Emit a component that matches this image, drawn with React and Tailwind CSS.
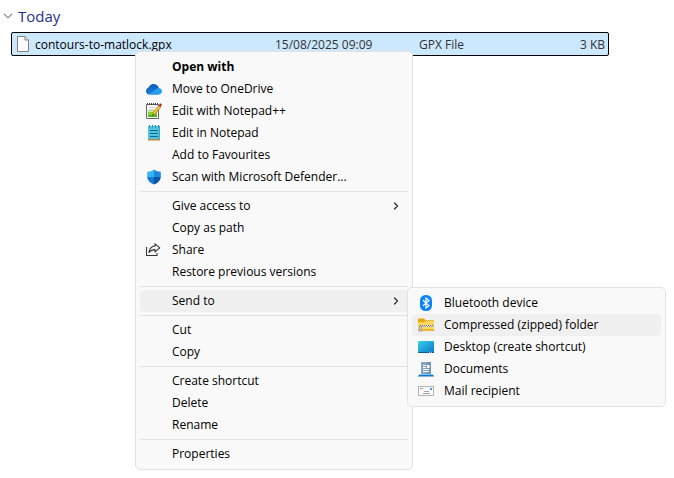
import { ChevronDown, ChevronRight } from "lucide-react";

function OneDriveIcon() {
  return (
    <svg viewBox="0 0 16 16" className="size-4" aria-hidden="true">
      <path d="M2 9C2.400 5.500 4.500 3 7.500 3c2.700 0 4.800 1.700 5.500 4.200L9 11z" fill="#1061bd" />
      <path d="M3.800 13.500A3.700 3.700 0 0 1 0 10c0-2.200 1.700-3.700 3.800-3.700 1.700 0 2.700.6 4 1.500L13 13.500z" fill="#1570d0" />
      <path d="M2.800 13.300 8.500 9c1.400-1 2.500-1.900 4-1.900 2 0 3.500 1.500 3.500 3.200s-1.400 3.200-3.200 3.200H4c-.5 0-.8 0-1.200-.2z" fill="#2a9df0" />
    </svg>
  );
}

function NotepadPlusIcon() {
  return (
    <svg viewBox="0 0 16 16" className="size-4" aria-hidden="true">
      <path d="M.5 1.500h12v14H.5z" fill="#fbfbf8" stroke="#666" />
      <path d="M1 1h11" stroke="#444" strokeWidth="2" strokeDasharray="1 1" />
      <path d="M3 4.500h6M3 6.500h5" stroke="#d4d4d0" />
      <path d="M2 7h9v7H2z" fill="#c4e88f" />
      <path d="M2 9h9v5H2z" fill="#84d133" />
      <path d="M2 12h9v2H2z" fill="#55b51e" />
      <path d="M6.500 12.500 7.200 9.500 12.800 2.500l2 1.600-5.700 7z" fill="#f6c52c" stroke="#8a6412" strokeWidth=".6" />
      <path d="m12.700 2.600 1.500-2.400L16 1.600l-1.400 2.300z" fill="#b3262b" />
      <path d="m6.500 12.500.3-1.500 1 .9z" fill="#222" />
    </svg>
  );
}

function NotepadIcon() {
  return (
    <svg viewBox="0 0 16 16" className="size-4" aria-hidden="true">
      <path d="M2 1h12v13H2z" fill="#50c3dd" />
      <path d="M2 14h12v1.500H2z" fill="#b98a4c" />
      <path d="M13 1h1v13h-1z" fill="#37a9c8" />
      <path d="M3.500 0v2.500M6.500 0v2.500M9.500 0v2.500M12.500 0v2.500" stroke="#2c86ae" />
      <path d="M4 5.500h8M4 8.500h8M4 11.500h8" stroke="#17648f" />
    </svg>
  );
}

function DefenderIcon() {
  return (
    <svg viewBox="0 0 16 16" className="size-4" aria-hidden="true">
      <path d="M8 .5C6 2 4 2.700 1.200 2.700V8H8z" fill="#38b5f0" />
      <path d="M8 .5c2 1.500 4 2.200 6.800 2.200V8H8z" fill="#1a8be0" />
      <path d="M1.200 8C1.500 11.500 4 14 8 15.600V8z" fill="#1479d2" />
      <path d="M14.800 8c-.3 3.500-2.800 6-6.800 7.600V8z" fill="#0b55a8" />
    </svg>
  );
}

function ShareIcon() {
  return (
    <svg viewBox="0 0 16 16" className="size-4" fill="none" stroke="#333" strokeWidth="1.100" strokeLinejoin="round" aria-hidden="true">
      <path d="M.5 5v8.500h10.500V11" />
      <path d="M9 1.800 13.800 5.800 9 9.800V7.600C6.300 7.400 4.500 8.500 3 10.500 3.400 7 5.500 4.300 9 4z" />
    </svg>
  );
}

function BluetoothIcon() {
  return (
    <svg viewBox="0 0 16 16" className="size-4" aria-hidden="true">
      <rect x="2" width="12" height="16" rx="5.500" fill="#0a84ff" />
      <path d="m5 5.200 6 5.400L8 13V3l3 2.500-6 5.300" fill="none" stroke="#fff" strokeWidth="1.200" />
    </svg>
  );
}

function ZipIcon() {
  return (
    <svg viewBox="0 0 16 16" className="size-4" aria-hidden="true">
      <path d="M0 2.500c0-.5.4-.9.9-.9H6L7.500 3.200H15c.6 0 1 .4 1 .9V8H0z" fill="#e9a60c" />
      <path d="M0 5.200h6L7.500 4H15c.6 0 1 .3 1 .8v8.400c0 .5-.4.900-1 .900H1c-.6 0-1-.4-1-.9z" fill="#ffd65e" />
      <path d="M0 12h16v1.200c0 .5-.4.9-1 .9H1c-.6 0-1-.4-1-.9z" fill="#f2b52b" />
      <path d="M2 9h14" stroke="#e4e4e4" strokeWidth="2" />
      <path d="M2 8.500h14" stroke="#666" strokeDasharray="1 1" />
      <path d="M3 9.500h13" stroke="#999" strokeDasharray="1 1" />
      <path d="M1.500 9h2v2l.5 3H1l.5-3z" fill="#d6d6d6" stroke="#888" strokeWidth=".7" />
    </svg>
  );
}

function DesktopIcon() {
  return (
    <svg viewBox="0 0 16 16" className="size-4" aria-hidden="true">
      <defs>
        <linearGradient id="desk" x1="0" y1="0" x2="1" y2="1">
          <stop offset="0" stopColor="#35d3e6" />
          <stop offset="1" stopColor="#0b74c9" />
        </linearGradient>
      </defs>
      <rect y="2" width="16" height="12" rx=".8" fill="url(#desk)" />
      <path d="M0 13h16v.2c0 .5-.3.8-.8.8H.8c-.5 0-.8-.3-.8-.8z" fill="#0a5a9c" />
      <path d="M11 13.300h4" stroke="#fff" strokeWidth=".9" strokeDasharray="1 1" />
    </svg>
  );
}

function DocumentsIcon() {
  return (
    <svg viewBox="0 0 16 16" className="size-4" aria-hidden="true">
      <path d="M3 2c0-.6.400-1 1-1h8c.6 0 1 .4 1 1v12H3z" fill="#86a5c3" />
      <path d="M9 1h3c.6 0 1 .4 1 1v12H9z" fill="#7393b5" />
      <path d="M5 4.500h3M5 6.500h3M5 8.500h6M5 10.500h6" stroke="#fff" />
      <path d="M9 4h2.500v3H9z" fill="#fff" />
      <path d="M1.500 13.500h13L16 15v.5H0V15z" fill="#1177cf" />
      <path d="M2 13h12l1 1H1z" fill="#7cc4f5" />
    </svg>
  );
}

function MailIcon() {
  return (
    <svg viewBox="0 0 16 16" className="size-4" aria-hidden="true">
      <rect x=".5" y="3.500" width="15" height="9" fill="#fafafa" stroke="#b4b4b4" />
      <path d="M2 5.500h3M6 8.500h5M5 10.500h7" stroke="#a3a3a3" />
      <path d="M12 5h2v2h-2z" fill="#3a93e6" />
    </svg>
  );
}

function FileIcon() {
  return (
    <svg viewBox="0 0 12 16" className="h-4 w-3 shrink-0" aria-hidden="true">
      <path d="M.5.5h7.500l3.500 3.500v11.500H.5z" fill="#fbfbfb" stroke="#828282" />
      <path d="M8 .5V4h3.500" fill="#e8e8e8" stroke="#828282" />
    </svg>
  );
}

const menuGroups = [
  [
    { label: "Open with", bold: true },
    { label: "Move to OneDrive", icon: OneDriveIcon },
    { label: "Edit with Notepad++", icon: NotepadPlusIcon },
    { label: "Edit in Notepad", icon: NotepadIcon },
    { label: "Add to Favourites" },
    { label: "Scan with Microsoft Defender...", icon: DefenderIcon },
  ],
  [
    { label: "Give access to", arrow: true },
    { label: "Copy as path" },
    { label: "Share", icon: ShareIcon },
    { label: "Restore previous versions" },
  ],
  [
    {
      label: "Send to",
      arrow: true,
      active: true,
      children: [
        { label: "Bluetooth device", icon: BluetoothIcon },
        { label: "Compressed (zipped) folder", icon: ZipIcon, active: true },
        { label: "Desktop (create shortcut)", icon: DesktopIcon },
        { label: "Documents", icon: DocumentsIcon },
        { label: "Mail recipient", icon: MailIcon },
      ],
    },
  ],
  [{ label: "Cut" }, { label: "Copy" }],
  [{ label: "Create shortcut" }, { label: "Delete" }, { label: "Rename" }],
  [{ label: "Properties" }],
];

const panel = "absolute rounded-[5px] border border-[#e2e2e2] bg-[#f9f9f9] p-1";

function MenuItem({ item }) {
  const Icon = item.icon;
  return (
    <li role="none" className="relative">
      <button
        type="button"
        role="menuitem"
        aria-haspopup={item.arrow ? "menu" : undefined}
        aria-expanded={item.children ? true : undefined}
        className={`flex h-[22px] w-full items-center gap-2.5 rounded-[4px] px-1.5 text-left whitespace-nowrap hover:bg-[#f0f0f0] ${
          item.active ? "bg-[#f0f0f0]" : ""
        } ${item.bold ? "font-bold" : ""}`}
      >
        <span className="size-4 shrink-0">{Icon && <Icon />}</span>
        <span className="flex-1">{item.label}</span>
        {item.arrow && <ChevronRight className="size-3 text-[#2b2b33]" strokeWidth={2.5} aria-hidden="true" />}
      </button>
      {item.children && (
        <ul role="menu" aria-label={item.label} className={`${panel} -top-[3px] left-[267px] w-[259px]`}>
          {item.children.map((child) => (
            <MenuItem key={child.label} item={child} />
          ))}
        </ul>
      )}
    </li>
  );
}

function ContextMenu() {
  return (
    <div role="menu" aria-label="File actions" className={`${panel} top-[19px] left-[124px] w-[278px] text-black`}>
      {menuGroups.map((group, i) => (
        <ul key={group[0].label} role="group" className={i > 0 ? "mt-[3px] border-t border-[#e2e2e2] pt-[3px]" : ""}>
          {group.map((item) => (
            <MenuItem key={item.label} item={item} />
          ))}
        </ul>
      ))}
    </div>
  );
}

export default function App() {
  return (
    <main className="min-h-screen bg-white pt-2 pr-[65px] font-['Open_Sans','Noto_Sans',sans-serif] text-[12px] leading-4">
      <button type="button" aria-expanded="true" className="flex h-4 items-center gap-1 pl-0.5 text-[15px] text-[#1e3287]">
        <ChevronDown className="size-3 scale-125 text-[#8a8a8a]" strokeWidth={2} aria-hidden="true" />
        Today
      </button>
      <div className="relative mt-2 ml-[11px]">
        <div className="rounded-[2px] border border-black bg-[#cce8ff]">
          <table className="w-full table-fixed border-collapse text-[#333]">
            <colgroup>
              <col className="w-[263px]" />
              <col className="w-36" />
              <col className="w-[120px]" />
              <col />
            </colgroup>
            <tbody>
              <tr className="h-[22px]">
                <td className="pl-[5px]">
                  <span className="flex items-center gap-1.5 text-black">
                    <FileIcon />
                    <span className="pt-0.5">contours-to-matlock.gpx</span>
                  </span>
                </td>
                <td className="pt-0.5">15/08/2025 09:09</td>
                <td className="pt-0.5">GPX File</td>
                <td className="pt-0.5 pr-[3px] text-right">3 KB</td>
              </tr>
            </tbody>
          </table>
        </div>
        <ContextMenu />
      </div>
    </main>
  );
}
